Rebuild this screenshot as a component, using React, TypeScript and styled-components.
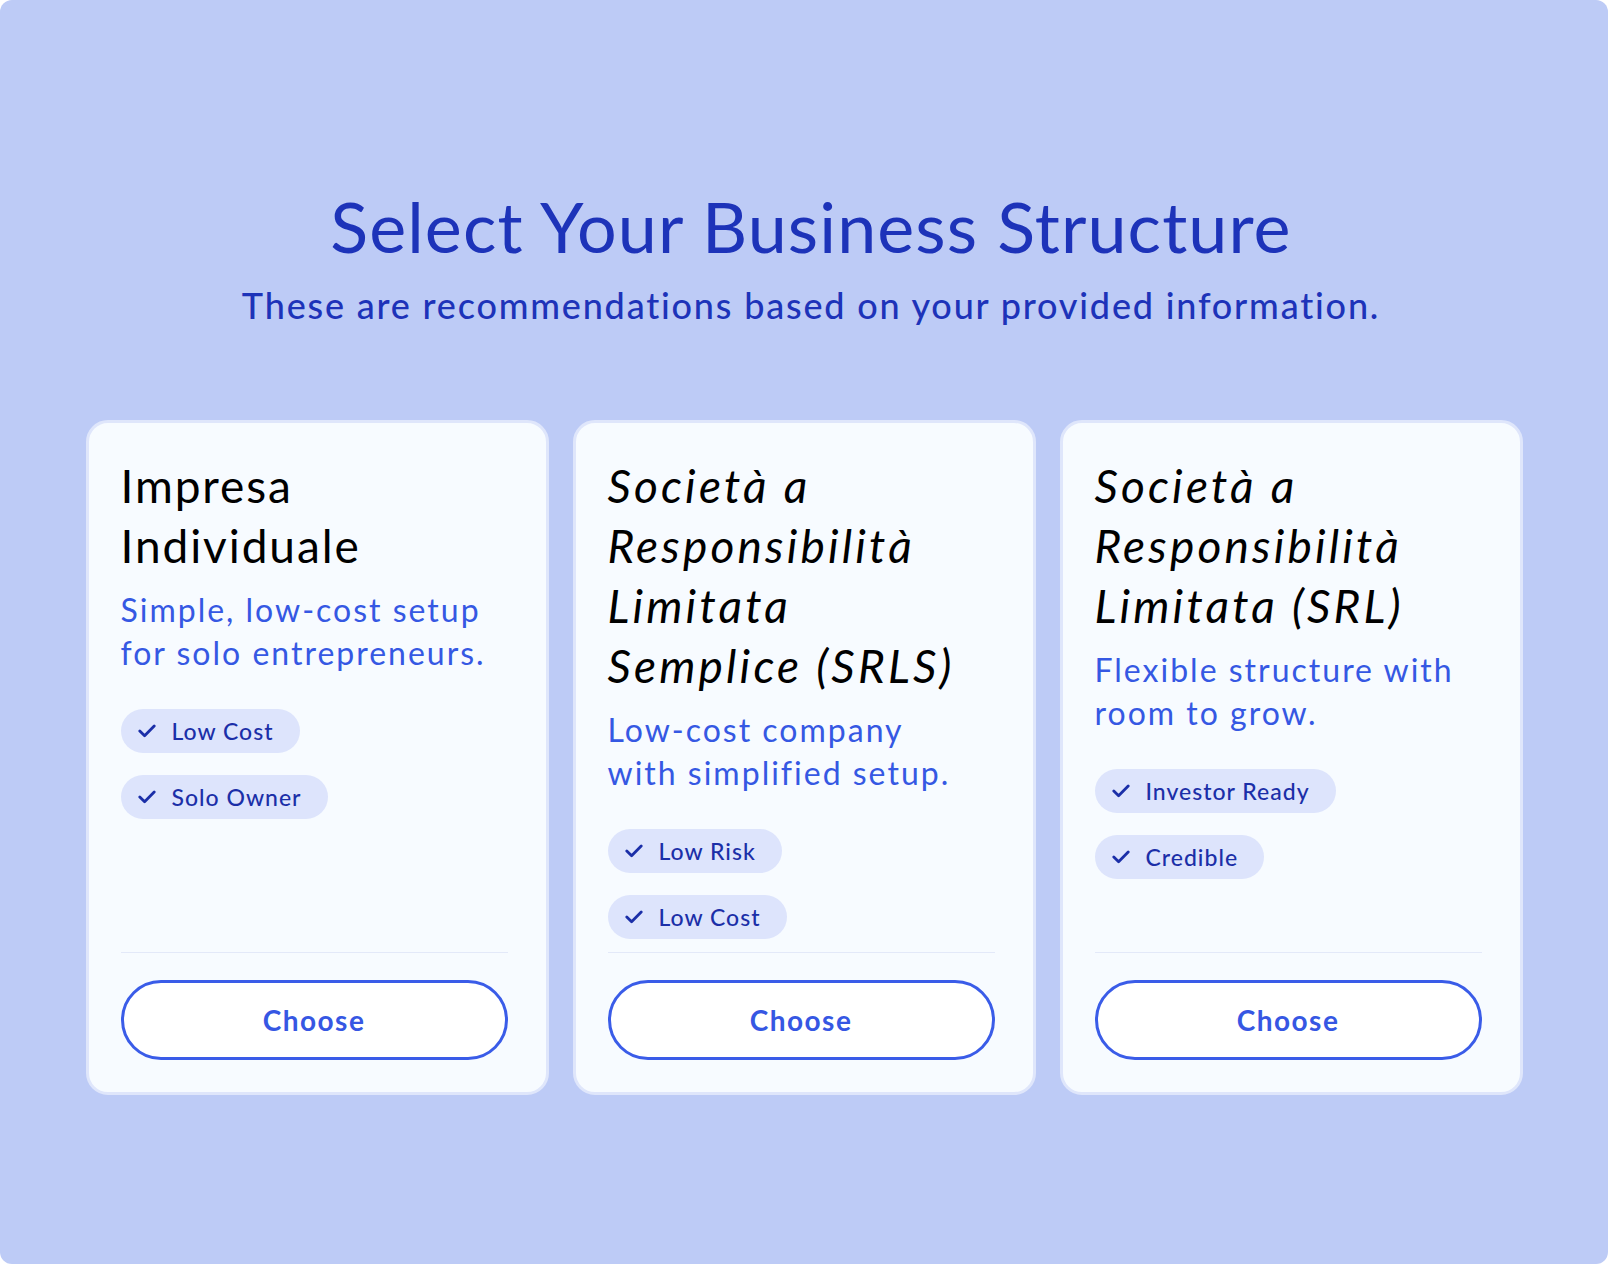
import React from 'react';
import styled, { createGlobalStyle } from 'styled-components';

interface IEstrutura {
	id: string;
	nome: string;
	corsivo: boolean;
	descrizione: string;
	vantaggi: string[];
}

const estrutture: IEstrutura[] = [
	{
		id: 'ditta',
		nome: 'Impresa Individuale',
		corsivo: false,
		descrizione: 'Simple, low-cost setup for solo entrepreneurs.',
		vantaggi: ['Low Cost', 'Solo Owner']
	},
	{
		id: 'srls',
		nome: 'Società a Responsibilità Limitata Semplice (SRLS)',
		corsivo: true,
		descrizione: 'Low-cost company with simplified setup.',
		vantaggi: ['Low Risk', 'Low Cost']
	},
	{
		id: 'srl',
		nome: 'Società a Responsibilità Limitata (SRL)',
		corsivo: true,
		descrizione: 'Flexible structure with room to grow.',
		vantaggi: ['Investor Ready', 'Credible']
	}
];

function IconaCheck() {
	return (
		<svg width="18" height="14" viewBox="0 0 18 14" fill="none">
			<polyline points="1.8,7 6.6,11.8 16.2,2" stroke="currentColor" strokeWidth="2.8" strokeLinecap="round" strokeLinejoin="round" />
		</svg>
	);
}

function App() {
	return (
		<>
			<GlobalStyle />
			<Pannello>
				<Intestazione>
					<Titolo>Select Your Business Structure</Titolo>
					<Sottotitolo>These are recommendations based on your provided information.</Sottotitolo>
				</Intestazione>
				<Griglia>
					{estrutture.map((e) => (
						<Scheda key={e.id}>
							<NomeScheda $corsivo={e.corsivo}>{e.nome}</NomeScheda>
							<Descrizione>{e.descrizione}</Descrizione>
							<ListaVantaggi>
								{e.vantaggi.map((v) => (
									<Pillola key={v}>
										<IconaCheck />
										{v}
									</Pillola>
								))}
							</ListaVantaggi>
							<Piede>
								<Bottone>Choose</Bottone>
							</Piede>
						</Scheda>
					))}
				</Griglia>
			</Pannello>
		</>
	);
}

export default App;

const GlobalStyle = createGlobalStyle`
	html, body {
		margin: 0;
		padding: 0;
		background: #ffffff;
	}
	* {
		box-sizing: border-box;
	}
`;

const Pannello = styled.div`
	min-height: 100vh;
	background-color: #bdcbf6;
	border-radius: 12px;
	padding-top: 184px;
	display: flex;
	flex-direction: column;
	align-items: center;
	font-family: Lato, 'Liberation Sans', sans-serif;
`;

const Intestazione = styled.header`
	display: flex;
	flex-direction: column;
	align-items: center;
	padding-left: 14px;
`;

const Titolo = styled.h1`
	margin: 0;
	font-size: 70px;
	line-height: 84px;
	font-weight: 400;
	color: #1d33b9;
	letter-spacing: 1.1px;
`;

const Sottotitolo = styled.p`
	margin: 16px 0 0;
	font-size: 36px;
	line-height: 43px;
	font-weight: 500;
	color: #1d33b9;
	letter-spacing: 1.8px;
`;

const Griglia = styled.div`
	margin-top: 93px;
	width: 1437px;
	display: grid;
	grid-template-columns: repeat(3, 1fr);
	gap: 24px;
`;

const Scheda = styled.div`
	display: flex;
	flex-direction: column;
	background-color: #f7fbff;
	border: 3px solid #dfe6fb;
	border-radius: 22px;
	padding: 33px 38px 32px 32px;
`;

const NomeScheda = styled.h2<{ $corsivo: boolean }>`
	margin: 0;
	max-width: 372px;
	font-size: 46px;
	line-height: 60px;
	font-weight: 400;
	letter-spacing: ${(p) => (p.$corsivo ? '3.2px' : '1.9px')};
	font-style: ${(p) => (p.$corsivo ? 'italic' : 'normal')};
	color: #000000;
`;

const Descrizione = styled.p`
	margin: 13px 0 0;
	max-width: 368px;
	font-size: 32px;
	line-height: 42.5px;
	font-weight: 400;
	letter-spacing: 2px;
	color: #3558e3;
`;

const ListaVantaggi = styled.div`
	margin-top: 35px;
	margin-bottom: 13px;
	display: flex;
	flex-direction: column;
	align-items: flex-start;
	gap: 22px;
`;

const Pillola = styled.span`
	display: inline-flex;
	align-items: center;
	gap: 16px;
	height: 44px;
	padding: 0 26px 0 17px;
	border-radius: 22px;
	background-color: #dde4fc;
	color: #1b2fa8;
	font-size: 23px;
	font-weight: 500;
	letter-spacing: 1px;
`;

const Piede = styled.div`
	margin-top: auto;
	border-top: 1.5px solid #e3e9f9;
	padding-top: 27px;
`;

const Bottone = styled.button`
	width: 100%;
	height: 80px;
	border: 3px solid #3a5ce8;
	border-radius: 40px;
	background-color: #ffffff;
	color: #3657e3;
	font-family: Lato, 'Liberation Sans', sans-serif;
	font-size: 28px;
	font-weight: 700;
	letter-spacing: 1.5px;
	cursor: pointer;
`;
